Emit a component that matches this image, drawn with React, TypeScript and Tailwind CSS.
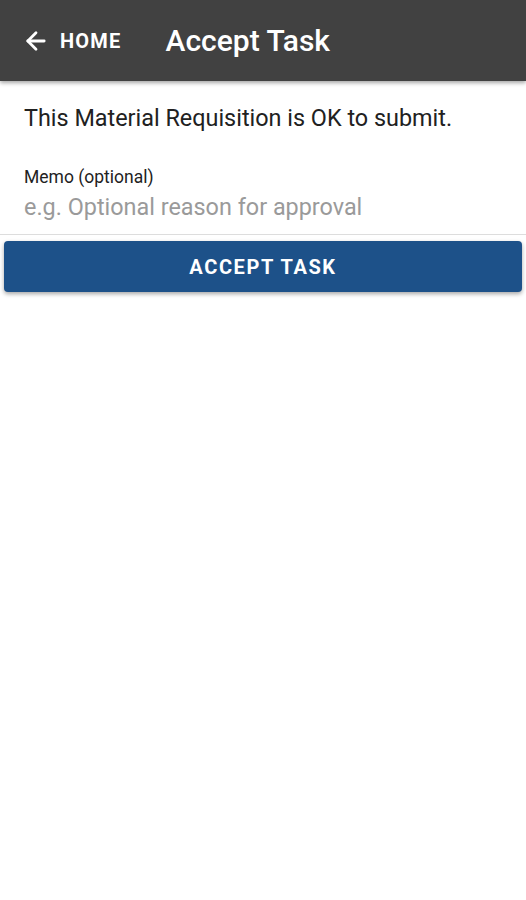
import { ArrowLeft } from 'lucide-react';

export default function App() {
  return (
    <div className="min-h-[900px] bg-white font-['Roboto',sans-serif]">
      <header className="h-[81px] bg-[#414141] flex items-center px-[22px] shadow-[0_2px_4px_rgba(0,0,0,0.35)] relative">
        <button className="flex items-center gap-[10px] text-white">
          <ArrowLeft size={28} strokeWidth={2.4} />
          <span className="text-[20px] font-bold tracking-[1.2px]">HOME</span>
        </button>
        <h1 className="ml-[44px] text-[30px] font-medium text-white">Accept Task</h1>
      </header>

      <div className="px-6 pt-[22px]">
        <p className="text-[23.4px] text-[#212121] leading-[30px]">
          This Material Requisition is OK to submit.
        </p>
        <label className="block mt-[34px] text-[17.5px] text-[#222] leading-[20px]">Memo (optional)</label>
        <input
          className="block w-full mt-[6px] text-[23.4px] leading-[28px] outline-none placeholder:text-[#9a9a9a]"
          placeholder="e.g. Optional reason for approval"
        />
      </div>
      <div className="mt-[13px] h-px bg-[#dddddd]" />

      <div className="px-1 pt-[6px]">
        <button className="w-full h-[51px] rounded bg-[#1d5189] text-white text-[20px] font-bold tracking-[1.6px] shadow-[0_2px_4px_rgba(0,0,0,0.35)]">
          ACCEPT TASK
        </button>
      </div>
    </div>
  );
}
